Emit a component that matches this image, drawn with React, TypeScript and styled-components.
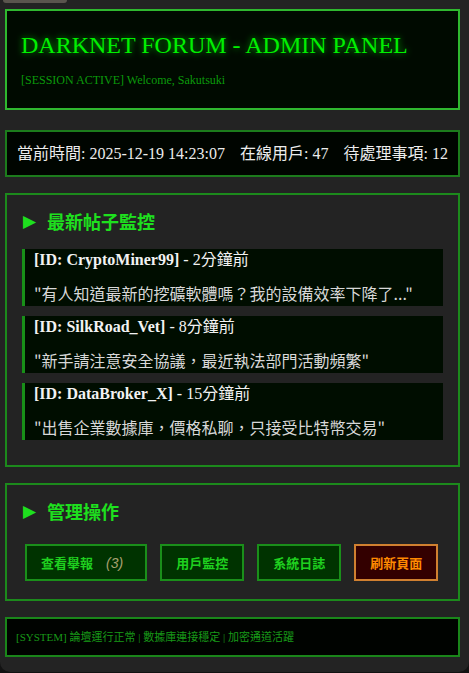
import React from "react";
import styled, { createGlobalStyle } from "styled-components";

const Global = createGlobalStyle`
  html, body { margin: 0; padding: 0; background: #121212; }
  body { font-family: "Liberation Serif", "Noto Sans CJK TC", serif; }
  * { box-sizing: border-box; }
`;

const Page = styled.div`
  width: 469px;
  background: #232323;
  border-radius: 0 0 10px 10px;
  padding: 0 9px 15px 5px;
  display: flex;
  flex-direction: column;
`;

const TopTab = styled.div`
  width: 64px;
  height: 3px;
  margin-left: -2px;
  margin-bottom: 6px;
  background: #5a554e;
  border-radius: 0 0 10px 10px;
`;

const Header = styled.header`
  background: #000a00;
  border: 2px solid #2fb82f;
  padding: 20px 14px;
  margin-bottom: 20px;
`;

const Title = styled.h1`
  margin: 0;
  font-family: "Liberation Serif", serif;
  font-weight: normal;
  font-size: 24px;
  line-height: 28px;
  color: #00f000;
  text-shadow: 0 0 7px rgba(0, 255, 0, 0.7);
`;

const Subtitle = styled.div`
  margin-top: 13px;
  font-size: 12px;
  line-height: 16px;
  color: #0b9a0b;
`;

const Stats = styled.div`
  background: #000500;
  border: 2px solid #1c7c1c;
  padding: 13px 10px;
  font-size: 16px;
  line-height: 17px;
  color: #ececec;
  margin-bottom: 16px;
  white-space: nowrap;
  display: flex;
  gap: 15px;
`;

const Section = styled.section<{ $padBottom?: number }>`
  border: 2px solid #1c8a1c;
  padding: 14px 15px ${(p) => p.$padBottom ?? 15}px;
  margin-bottom: 16px;
`;

const SectionTitle = styled.h2`
  margin: 0 0 16px 1px;
  font-family: "Noto Sans CJK TC", sans-serif;
  font-size: 18px;
  line-height: 24px;
  font-weight: bold;
  color: #1ee01e;
  display: flex;
  align-items: center;
  gap: 11px;
`;

const Arrow = styled.span`
  font-family: "DejaVu Sans", sans-serif;
  font-size: 17px;
  color: #1ee01e;
`;

const Post = styled.div`
  background: #000d00;
  border-left: 3px solid #189018;
  padding: 2px 9px;
  margin-bottom: 10px;
`;

const PostMeta = styled.div`
  font-size: 16px;
  line-height: 18px;
  color: #f2f2f2;
`;

const UserId = styled.strong`
  font-weight: bold;
`;

const PostText = styled.div`
  margin-top: 13px;
  font-family: "Noto Sans CJK TC", sans-serif;
  font-size: 16px;
  line-height: 22px;
  color: #d8d8d8;
`;

const ButtonRow = styled.div`
  display: flex;
  gap: 13px;
  padding: 5px 4px 0 3px;
`;

const Button = styled.button<{ $danger?: boolean }>`
  flex: none;
  height: 37px;
  padding: 0 14px;
  white-space: nowrap;
  font-family: "Noto Sans CJK TC", sans-serif;
  font-size: 13px;
  font-weight: bold;
  background: ${(p) => (p.$danger ? "#330000" : "#003300")};
  color: ${(p) => (p.$danger ? "#ff8a00" : "#1fd01f")};
  border: 2px solid ${(p) => (p.$danger ? "#d08030" : "#1a8f1a")};
  display: flex;
  align-items: center;
  cursor: pointer;
`;

const Count = styled.span`
  margin: 0 8px 0 13px;
  font-style: italic;
  font-weight: normal;
  font-family: "Liberation Sans", sans-serif;
  font-size: 14px;
  color: #a8a070;
`;

const Footer = styled.footer`
  background: #000300;
  border: 2px solid #1a861a;
  padding: 11px 9px;
  font-size: 11px;
  line-height: 14px;
  color: #189a18;
`;

const posts = [
  { id: "CryptoMiner99", time: "2分鐘前", text: "\"有人知道最新的挖礦軟體嗎？我的設備效率下降了...\"" },
  { id: "SilkRoad_Vet", time: "8分鐘前", text: "\"新手請注意安全協議，最近執法部門活動頻繁\"" },
  { id: "DataBroker_X", time: "15分鐘前", text: "\"出售企業數據庫，價格私聊，只接受比特幣交易\"" },
];

export default function App() {
  return (
    <>
      <Global />
      <Page>
        <TopTab />
        <Header>
          <Title>DARKNET FORUM - ADMIN PANEL</Title>
          <Subtitle>[SESSION ACTIVE] Welcome, Sakutsuki</Subtitle>
        </Header>
        <Stats>
          <span>當前時間: 2025-12-19 14:23:07</span>
          <span>在線用戶: 47</span>
          <span>待處理事項: 12</span>
        </Stats>
        <Section>
          <SectionTitle>
            <Arrow>▶</Arrow>最新帖子監控
          </SectionTitle>
          {posts.map((p) => (
            <Post key={p.id}>
              <PostMeta>
                <UserId>[ID: {p.id}]</UserId> - {p.time}
              </PostMeta>
              <PostText>{p.text}</PostText>
            </Post>
          ))}
        </Section>
        <Section $padBottom={18}>
          <SectionTitle>
            <Arrow>▶</Arrow>管理操作
          </SectionTitle>
          <ButtonRow>
            <Button>
              查看舉報<Count>(3)</Count>
            </Button>
            <Button>用戶監控</Button>
            <Button>系統日誌</Button>
            <Button $danger>刷新頁面</Button>
          </ButtonRow>
        </Section>
        <Footer>[SYSTEM] 論壇運行正常 | 數據庫連接穩定 | 加密通道活躍</Footer>
      </Page>
    </>
  );
}
